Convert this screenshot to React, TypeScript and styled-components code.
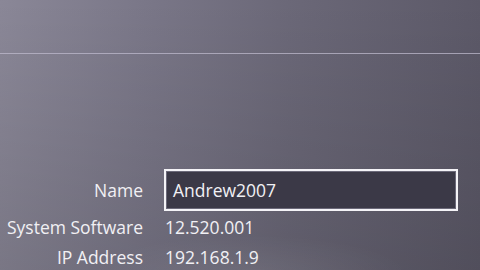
import React from 'react';
import styled, { createGlobalStyle } from 'styled-components';

const FONT = '"Open Sans", "Noto Sans", "DejaVu Sans", sans-serif';
const TEXT = '#f1f0f4';

const GlobalStyle = createGlobalStyle`
  html, body {
    margin: 0;
    padding: 0;
    width: 480px;
    height: 270px;
    overflow: hidden;
  }
  body {
    font-family: ${FONT};
    background: #6c6979;
  }
`;

const Screen = styled.div`
  width: 480px;
  height: 270px;
  display: flex;
  flex-direction: column;
  background:
    radial-gradient(ellipse 160px 40px at 250px 275px, rgba(255, 255, 255, 0.08), transparent),
    linear-gradient(180deg, rgba(0, 0, 0, 0) 0%, rgba(0, 0, 0, 0.12) 100%),
    linear-gradient(90deg, #8a8797 0%, #7a7788 30%, #6b6878 60%, #5c5968 100%);
  color: ${TEXT};
  font-family: ${FONT};
`;

const Header = styled.div`
  height: 53px;
  flex-shrink: 0;
`;

const Divider = styled.div`
  height: 1px;
  flex-shrink: 0;
  background: rgba(190, 186, 204, 0.75);
`;

const Body = styled.div`
  flex: 1;
  padding-top: 115px;
`;

const InfoGrid = styled.div`
  display: grid;
  grid-template-columns: 143px 1fr;
  column-gap: 21px;
  row-gap: 3px;
  align-items: center;
  padding-right: 22px;
`;

const Label = styled.div`
  text-align: right;
  font-size: 17.5px;
  line-height: 27px;
  white-space: nowrap;
`;

const Value = styled.div`
  font-size: 17.5px;
  line-height: 27px;
  padding-left: 1px;
  white-space: nowrap;
`;

const NameField = styled.div`
  height: 38px;
  display: flex;
  align-items: center;
  padding: 0 7px;
  background: #3b3947;
  border: 2px solid #f4f3f7;
  box-shadow: inset 0 0 0 1px rgba(120, 118, 134, 0.8);
  font-size: 17.5px;
  color: ${TEXT};
`;

const rows = [
  { label: 'System Software', value: '12.520.001' },
  { label: 'IP Address', value: '192.168.1.9' },
];

export default function App() {
  return (
    <>
      <GlobalStyle />
      <Screen>
        <Header />
        <Divider />
        <Body>
          <InfoGrid>
            <Label>Name</Label>
            <NameField>Andrew2007</NameField>
            {rows.map((r) => (
              <React.Fragment key={r.label}>
                <Label>{r.label}</Label>
                <Value>{r.value}</Value>
              </React.Fragment>
            ))}
          </InfoGrid>
        </Body>
      </Screen>
    </>
  );
}
